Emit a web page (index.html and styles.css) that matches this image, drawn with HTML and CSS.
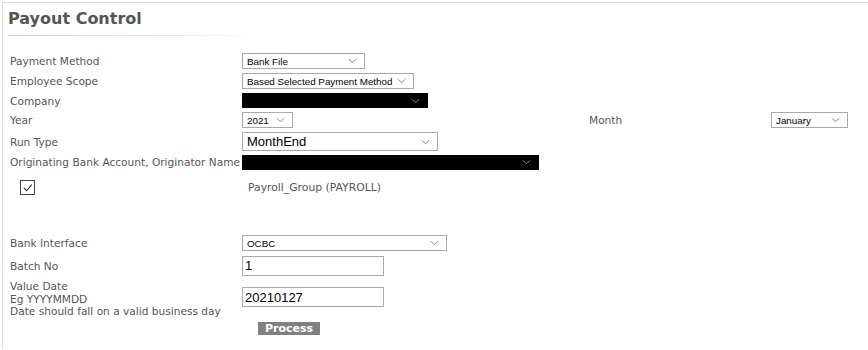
FILE: index.html
```html
<!DOCTYPE html>
<html lang="en">

<head>
    <meta charset="UTF-8">
    <title>Payout Control</title>
    <link rel="stylesheet" href="styles.css">
</head>

<body>
    <div class="panel">
        <div class="title">Payout Control</div>

        <form class="payout-form">
            <div class="row r1">
                <label class="label">Payment Method</label>
                <div class="select w-method">
                    <select><option>Bank File</option></select>
                    <svg class="chev" viewBox="0 0 10 6"><path d="M1 1 L5 5 L9 1" /></svg>
                </div>
            </div>

            <div class="row r2">
                <label class="label">Employee Scope</label>
                <div class="select w-scope">
                    <select><option>Based Selected Payment Method</option></select>
                    <svg class="chev" viewBox="0 0 10 6"><path d="M1 1 L5 5 L9 1" /></svg>
                </div>
            </div>

            <div class="row r3">
                <label class="label">Company</label>
                <div class="select dark w-company">
                    <select><option></option></select>
                    <svg class="chev" viewBox="0 0 10 6"><path d="M1 1 L5 5 L9 1" /></svg>
                </div>
            </div>

            <div class="row r4 year-row">
                <label class="label">Year</label>
                <div class="select w-year">
                    <select><option>2021</option></select>
                    <svg class="chev" viewBox="0 0 10 6"><path d="M1 1 L5 5 L9 1" /></svg>
                </div>
                <label class="label">Month</label>
                <div class="select w-month">
                    <select><option>January</option></select>
                    <svg class="chev" viewBox="0 0 10 6"><path d="M1 1 L5 5 L9 1" /></svg>
                </div>
            </div>

            <div class="row r5">
                <label class="label">Run Type</label>
                <div class="select big w-run">
                    <select><option>MonthEnd</option></select>
                    <svg class="chev" viewBox="0 0 10 6"><path d="M1 1 L5 5 L9 1" /></svg>
                </div>
            </div>

            <div class="row r6">
                <label class="label">Originating Bank Account, Originator Name</label>
                <div class="select dark w-bank">
                    <select><option></option></select>
                    <svg class="chev" viewBox="0 0 10 6"><path d="M1 1 L5 5 L9 1" /></svg>
                </div>
            </div>

            <!-- Pay groups -->
            <div class="group-row">
                <div class="check-cell">
                    <span class="checkbox">
                        <svg viewBox="0 0 14 14"><path d="M3 7.5 L6 10.5 L11.5 4" /></svg>
                    </span>
                </div>
                <div class="group-name">Payroll_Group (PAYROLL)</div>
            </div>

            <div class="row r7">
                <label class="label">Bank Interface</label>
                <div class="select w-interface">
                    <select><option>OCBC</option></select>
                    <svg class="chev" viewBox="0 0 10 6"><path d="M1 1 L5 5 L9 1" /></svg>
                </div>
            </div>

            <div class="row r8">
                <label class="label">Batch No</label>
                <input type="text" class="text-input" value="1">
            </div>

            <div class="row r9">
                <label class="label multi">Value Date<br>Eg YYYYMMDD<br>Date should fall on a valid business day</label>
                <input type="text" class="text-input date-input" value="20210127">
            </div>

            <div class="actions">
                <button type="button" class="process">Process</button>
            </div>
        </form>
    </div>
</body>

</html>
```

FILE: styles.css
```css
/* General Reset */
body {
    margin: 0;
    padding: 0;
    background: #fff;
    font-family: "DejaVu Sans", Verdana, sans-serif;
}

/* Outer panel */
.panel {
    margin: 2px 0 0 2px;
    border-top: 1px solid #dcdcdc;
    border-left: 1px solid #dcdcdc;
    height: 347px;
    box-sizing: border-box;
}

/* Title */
.title {
    margin: 0 0 0 5px;
    padding: 6px 0 7px 0;
    width: 245px;
    font-size: 16px;
    font-weight: bold;
    color: #555;
    border-bottom: 1px solid;
    border-image: linear-gradient(to right, #d0d0d0, #e8e8e8 70%, #fff) 1;
}

/* Form rows */
.payout-form {
    padding: 15px 0 0 7px;
}

.row {
    display: grid;
    grid-template-columns: 232px auto;
    align-items: center;
    justify-items: start;
}

.r1 { height: 20px; }
.r2 { height: 20px; }
.r3 { height: 19px; }
.r4 { height: 20px; }
.r5 { height: 23px; }
.r6 { height: 18px; }
.r7 { height: 18px; margin-top: 37px; }
.r8 { height: 23px; margin-top: 2px; }
.r9 { height: 40px; margin-top: 2px; }

.year-row {
    grid-template-columns: 232px 347px 182px auto;
}

.label {
    font-size: 10.6px;
    color: #555;
    white-space: nowrap;
}

.label.multi {
    line-height: 12.5px;
}

/* Dropdowns */
.select {
    display: flex;
    align-items: center;
    height: 16px;
    box-sizing: border-box;
    border: 1px solid #a9a9a9;
    background: #fff;
}

.select select {
    flex: 1;
    min-width: 0;
    -webkit-appearance: none;
    appearance: none;
    border: none;
    outline: none;
    background: transparent;
    padding: 0 0 0 4px;
    margin: 0;
    height: 14px;
    font-family: "Liberation Sans", Arial, sans-serif;
    font-size: 9.8px;
    color: #000;
}

.chev {
    width: 9px;
    height: 6px;
    margin-right: 7px;
    fill: none;
    stroke: #777;
    stroke-width: 1;
}

.select.dark {
    background: #000;
    border-color: #000;
    height: 15px;
}

.select.dark .chev {
    stroke: #999;
}

.select.big {
    height: 19px;
}

.select.big select {
    height: 17px;
    font-size: 13px;
}

.w-method { width: 123px; }
.w-scope { width: 172px; }
.w-company { width: 186px; }
.w-year { width: 51px; }
.w-month { width: 77px; }
.w-run { width: 196px; }
.w-bank { width: 297px; }
.w-interface { width: 205px; }

/* Pay group check row */
.group-row {
    display: flex;
    align-items: center;
    height: 19px;
    margin-top: 7px;
}

.check-cell {
    width: 238px;
    padding-left: 10px;
    box-sizing: border-box;
}

.checkbox {
    display: block;
    width: 15px;
    height: 15px;
    box-sizing: border-box;
    border: 1px solid #444;
    background: #fff;
}

.checkbox svg {
    display: block;
    width: 13px;
    height: 13px;
    fill: none;
    stroke: #333;
    stroke-width: 1.2;
}

.group-name {
    font-size: 10.8px;
    color: #555;
}

/* Text inputs */
.text-input {
    width: 142px;
    height: 20px;
    box-sizing: border-box;
    border: 1px solid #a9a9a9;
    padding: 0 2px;
    margin: 0;
    font-family: "Liberation Sans", Arial, sans-serif;
    font-size: 13px;
    color: #000;
    outline: none;
}

.date-input {
    margin-top: -4px;
}

/* Buttons */
.actions {
    padding: 3px 0 0 248px;
}

.process {
    display: block;
    width: 62px;
    height: 13px;
    padding: 0;
    border: none;
    background: #808080;
    color: #fff;
    font-family: "DejaVu Sans", Verdana, sans-serif;
    font-size: 11px;
    font-weight: bold;
    line-height: 13px;
    cursor: pointer;
}
```
